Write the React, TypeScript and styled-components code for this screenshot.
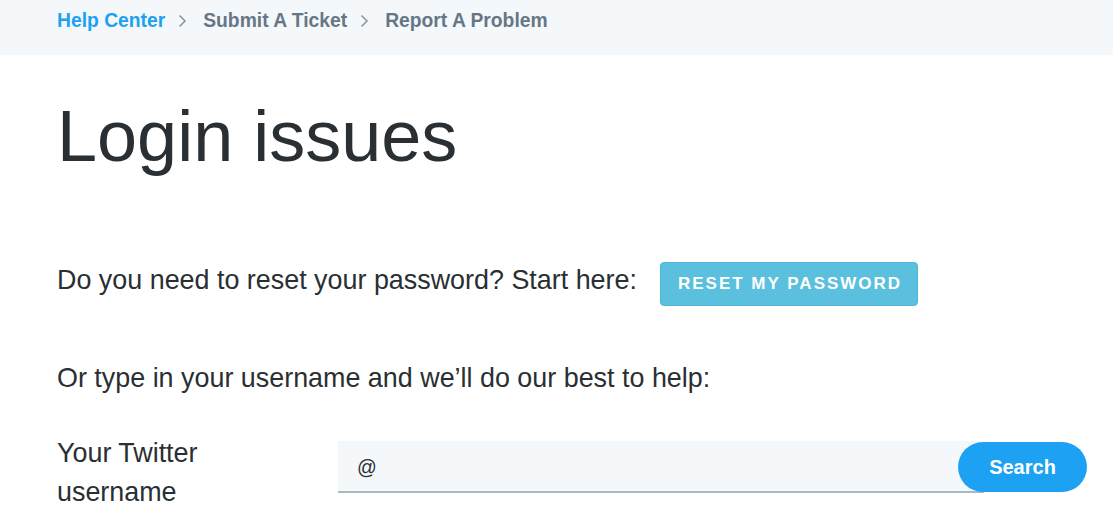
import React from 'react';
import styled, { createGlobalStyle } from 'styled-components';

const GlobalStyle = createGlobalStyle`
  html, body {
    margin: 0;
    padding: 0;
    background: #fff;
  }
  body {
    font-family: "Liberation Sans", Arial, sans-serif;
    color: #292f33;
  }
`;

const crumbs = [
  { label: 'Help Center', active: true },
  { label: 'Submit A Ticket', active: false },
  { label: 'Report A Problem', active: false },
];

const Chevron: React.FC = () => (
  <ChevronIcon width="9" height="14" viewBox="0 0 9 14" aria-hidden>
    <path d="M1.5 1.5 L7 7 L1.5 12.5" fill="none" stroke="#8899a6" strokeWidth="1.6" />
  </ChevronIcon>
);

export default function App() {
  return (
    <>
      <GlobalStyle />
      <Breadcrumbs>
        {crumbs.map((c, i) => (
          <React.Fragment key={c.label}>
            {i > 0 && <Chevron />}
            <Crumb $active={c.active}>{c.label}</Crumb>
          </React.Fragment>
        ))}
      </Breadcrumbs>
      <Main>
        <Title>Login issues</Title>
        <Row>
          <Text>Do you need to reset your password? Start here:</Text>
          <ResetButton>Reset my password</ResetButton>
        </Row>
        <Prompt>Or type in your username and we’ll do our best to help:</Prompt>
        <FormRow>
          <Label>
            Your Twitter
            <br />
            username
          </Label>
          <InputGroup>
            <Field>
              <Prefix>@</Prefix>
              <Input type="text" />
            </Field>
            <SearchButton>Search</SearchButton>
          </InputGroup>
        </FormRow>
      </Main>
    </>
  );
}

const Breadcrumbs = styled.nav`
  display: flex;
  align-items: center;
  height: 55px;
  padding: 0 0 14px 57px;
  box-sizing: border-box;
  background-color: #f5f8fa;
`;

const Crumb = styled.a<{ $active: boolean }>`
  font-size: 19.3px;
  font-weight: 700;
  color: ${p => (p.$active ? '#1da1f2' : '#657786')};
  text-decoration: none;
`;

const ChevronIcon = styled.svg`
  margin: 1px 16px 0 13px;
`;

const Main = styled.main`
  padding: 0 26px 0 57px;
`;

const Title = styled.h1`
  margin: 42px 0 0;
  font-size: 72px;
  font-weight: 400;
  line-height: 79px;
  color: #292f33;
`;

const Row = styled.div`
  display: flex;
  align-items: baseline;
  margin-top: 86px;
`;

const Text = styled.p`
  margin: 0;
  font-size: 26.9px;
  line-height: 32px;
`;

const ResetButton = styled.button`
  margin-left: 23px;
  height: 44px;
  padding: 0 15px 0 17px;
  border: 1px solid #4fb5d6;
  border-radius: 4px;
  background-color: #5bc0de;
  color: #fff;
  font-family: "Liberation Sans", Arial, sans-serif;
  font-size: 17px;
  font-weight: 700;
  letter-spacing: 2px;
  text-transform: uppercase;
`;

const Prompt = styled(Text)`
  margin-top: 56px;
`;

const FormRow = styled.div`
  display: flex;
  align-items: flex-start;
  margin-top: 47px;
`;

const Label = styled.label`
  width: 281px;
  flex-shrink: 0;
  margin-top: -7px;
  font-size: 26.9px;
  line-height: 39px;
`;

const InputGroup = styled.div`
  display: flex;
  flex: 1;
  align-items: flex-start;
  height: 52px;
`;

const Field = styled.div`
  display: flex;
  align-items: center;
  flex: 1;
  height: 50px;
  margin-right: -26px;
  background-color: #f5f8fa;
  border-bottom: 2px solid #aab8c2;
`;

const Prefix = styled.span`
  align-self: stretch;
  display: flex;
  align-items: center;
  padding: 2px 19px 0 19px;
  margin-bottom: -2px;
  border-bottom: 2px solid #aab8c2;
  font-size: 19.5px;
  color: #292f33;
`;

const Input = styled.input`
  flex: 1;
  min-width: 0;
  border: none;
  outline: none;
  background: transparent;
  font-family: "Liberation Sans", Arial, sans-serif;
  font-size: 19.5px;
`;

const SearchButton = styled.button`
  position: relative;
  width: 129px;
  height: 50px;
  margin-top: 1px;
  border: none;
  border-radius: 25px;
  background-color: #1da1f2;
  color: #fff;
  font-family: "Liberation Sans", Arial, sans-serif;
  font-size: 20px;
  font-weight: 700;
`;
